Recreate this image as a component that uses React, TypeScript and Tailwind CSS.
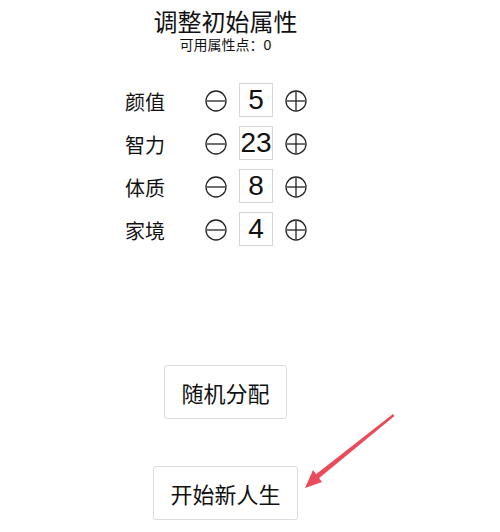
import React from "react";

const attrs = [
  { name: "颜值", value: 5 },
  { name: "智力", value: 23 },
  { name: "体质", value: 8 },
  { name: "家境", value: 4 },
];

function CircleIcon({ plus }: { plus?: boolean }) {
  return (
    <svg width="22" height="22" viewBox="0 0 22 22" className="block">
      <circle cx="11" cy="11" r="10" fill="none" stroke="#222" strokeWidth="1.3" />
      <line x1="2" y1="11" x2="20" y2="11" stroke="#222" strokeWidth="1.3" />
      {plus && <line x1="11" y1="2" x2="11" y2="20" stroke="#222" strokeWidth="1.3" />}
    </svg>
  );
}

export default function App() {
  const cjk = { fontFamily: '"Noto Sans CJK SC", "Noto Sans", sans-serif' };
  return (
    <div className="relative w-[500px] h-[532px] bg-white overflow-hidden text-[#111]" style={cjk}>
      <div className="w-[451px] flex flex-col items-center pt-[8px]">
        <div className="text-[24px] leading-[26px]">调整初始属性</div>
        <div className="mt-[2px] text-[14px] leading-[17px]">
          可用属性点：<span style={{ fontFamily: '"Liberation Sans", Arial, sans-serif' }}>0</span>
        </div>
      </div>
      <div className="mt-[24px] ml-[125px] flex flex-col">
        {attrs.map((a) => (
          <div key={a.name} className="h-[43px] flex items-center">
            <div className="w-[80px] text-[20px] leading-[24px] mt-[4px]">{a.name}</div>
            <div className="mt-[3px]">
              <CircleIcon />
            </div>
            <div
              className="ml-[12px] w-[34px] h-[34px] border border-[#d4d4d4] flex items-center justify-center text-[28px] leading-none"
              style={{ fontFamily: '"Liberation Sans", Arial, sans-serif' }}
            >
              {a.value}
            </div>
            <div className="ml-[12px] mt-[3px]">
              <CircleIcon plus />
            </div>
          </div>
        ))}
      </div>
      <div className="w-[451px] flex flex-col items-center mt-[115px]">
        <button className="h-[54px] px-[16px] border border-[#dcdcdc] rounded-[3px] bg-white text-[22px] leading-none">
          随机分配
        </button>
        <button className="mt-[47px] h-[54px] px-[16px] border border-[#dcdcdc] rounded-[3px] bg-white text-[22px] leading-none">
          开始新人生
        </button>
      </div>
      <svg className="absolute left-0 top-0 pointer-events-none" width="500" height="532">
        <polygon points="393,414 394.5,416 318,479 315,475" fill="#ea4b5b" />
        <polygon points="305,488 313,470 322,482" fill="#ea4b5b" />
      </svg>
    </div>
  );
}
